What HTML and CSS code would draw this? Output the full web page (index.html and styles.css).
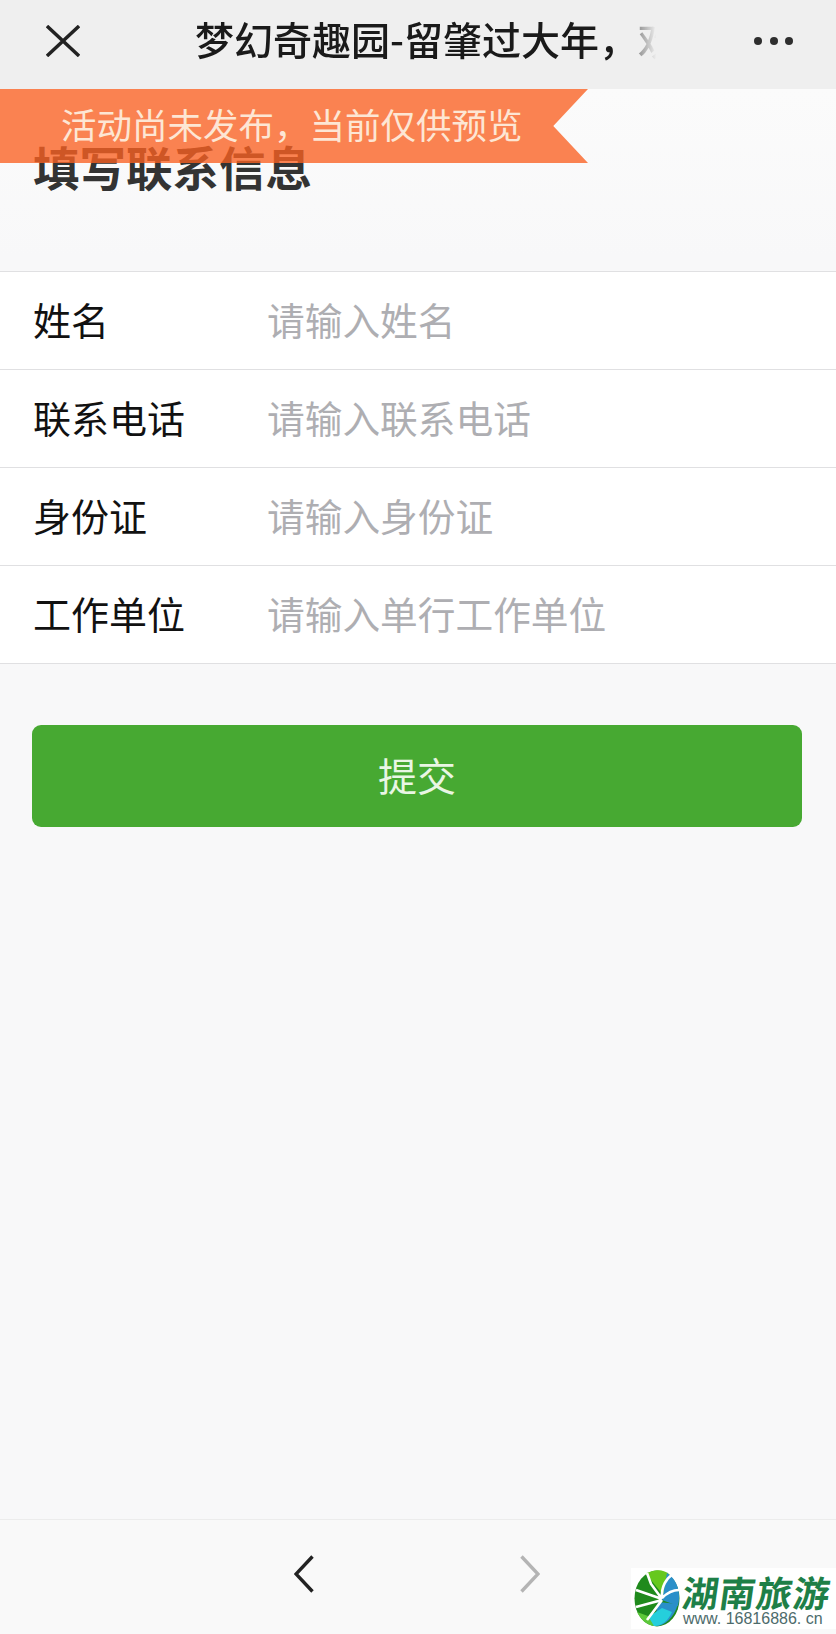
FILE: index.html
```html
<!DOCTYPE html>
<html lang="zh-CN">
<head>
    <meta charset="UTF-8">
    <meta name="viewport" content="width=device-width, initial-scale=1.0">
    <title>填写联系信息</title>
    <link rel="stylesheet" href="styles.css">
</head>
<body>
    <div class="page">
        <header class="top-bar">
            <svg class="close-icon" width="34" height="32" viewBox="0 0 34 32">
                <path d="M1 1 L33 31 M33 1 L1 31" fill="none" stroke="#222" stroke-width="3.4"/>
            </svg>
            <div class="top-title">梦幻奇趣园-留肇过大年，欢迎您</div>
            <div class="more-dots"><span></span><span></span><span></span></div>
        </header>

        <main class="content">
            <h1 class="form-title">填写联系信息</h1>
            <form class="form-list">
                <div class="form-row">
                    <label class="form-label">姓名</label>
                    <span class="form-hint">请输入姓名</span>
                </div>
                <div class="form-row">
                    <label class="form-label">联系电话</label>
                    <span class="form-hint">请输入联系电话</span>
                </div>
                <div class="form-row">
                    <label class="form-label">身份证</label>
                    <span class="form-hint">请输入身份证</span>
                </div>
                <div class="form-row">
                    <label class="form-label">工作单位</label>
                    <span class="form-hint">请输入单行工作单位</span>
                </div>
            </form>
            <button class="submit-btn" type="button">提交</button>
        </main>

        <footer class="bottom-bar">
            <svg class="nav-arrow" width="20" height="38" viewBox="0 0 20 38">
                <path d="M18.5 1.5 L2 19 L18.5 36.5" fill="none" stroke="#222" stroke-width="3.4"/>
            </svg>
            <svg class="nav-arrow" width="20" height="38" viewBox="0 0 20 38">
                <path d="M1.5 1.5 L18 19 L1.5 36.5" fill="none" stroke="#b4b4b4" stroke-width="3.4"/>
            </svg>
        </footer>

        <!-- banner sits over the heading, heading shows through it -->
        <div class="notice">
            <span class="notice-text">活动尚未发布，当前仅供预览</span>
        </div>

        <div class="watermark">
            <svg class="watermark-logo" width="46" height="57" viewBox="0 0 46 57">
                <ellipse cx="23" cy="28.5" rx="22.5" ry="28" fill="#1f8a1c"/>
                <path d="M12 4 C20 -1 30 -1 36 5 L30 26 Z" fill="#66c81e"/>
                <path d="M33 3 C44 10 47 24 44 36 L28 30 Z" fill="#2a8fc9"/>
                <path d="M44 34 C40 48 30 57 20 56 L24 32 Z" fill="#2a8fc9"/>
                <path d="M38 42 C34 51 27 57 19 56 L14 47 L28 38 Z" fill="#25cfdc"/>
                <path d="M3 42 C7 50 13 55 20 56 L14 46 Z" fill="#5cc83a"/>
                <path d="M2 20 L28 29 M2 37 L28 30 M13 3 L17 14 L28 29 M28 28 C27 16 33 8 38 5 M28 28 C34 22 40 20 45 20 M28 30 L13 50" fill="none" stroke="#fff" stroke-width="2.6"/>
            </svg>
            <div class="watermark-text">
                <div class="watermark-name">湖南旅游</div>
                <div class="watermark-url">www. 16816886. cn</div>
            </div>
        </div>
    </div>
</body>
</html>
```

FILE: styles.css
```css
* {
    box-sizing: border-box;
}
html, body {
    margin: 0;
    padding: 0;
}
body {
    font-family: "Noto Sans CJK SC", "Liberation Sans", sans-serif;
    background-color: #f8f8f9;
    color: #111;
}
.page {
    position: relative;
    width: 836px;
    height: 1634px;
    overflow: hidden;
    display: flex;
    flex-direction: column;
}
.top-bar {
    height: 89px;
    flex: none;
    background-color: #efefef;
    display: flex;
    align-items: center;
    padding: 0 43px 8px 46px;
}
.close-icon {
    flex: none;
}
.top-title {
    width: 466px;
    margin: 0 0 5px 115px;
    font-size: 39px;
    line-height: 50px;
    font-weight: 500;
    color: #1a1a1a;
    white-space: nowrap;
    overflow: hidden;
    -webkit-mask-image: linear-gradient(to right, #000 90%, transparent 99%);
    mask-image: linear-gradient(to right, #000 90%, transparent 99%);
}
.more-dots {
    margin-left: auto;
    display: flex;
    gap: 7.5px;
}
.more-dots span {
    width: 8px;
    height: 8px;
    border-radius: 50%;
    background-color: #2e2e2e;
}
.notice {
    position: absolute;
    left: 0;
    top: 89px;
    width: 588px;
    height: 74px;
    background-color: rgba(250, 96, 33, 0.78);
    clip-path: polygon(0 0, 100% 0, 94.1% 50%, 100% 100%, 0 100%);
    padding: 0 0 5px 61px;
    display: flex;
    align-items: center;
}
.notice-text {
    font-size: 35.5px;
    color: #fde6d4;
    white-space: nowrap;
}
.content {
    flex: 1;
    background: linear-gradient(#fbfbfb 0, #f8f8f9 170px);
}
.form-title {
    margin: 0;
    padding: 47px 0 0 33px;
    height: 182px;
    font-size: 46.5px;
    line-height: 60px;
    font-weight: 700;
    color: #333;
}
.form-list {
    background-color: #fff;
    border-top: 1px solid #e0e0e2;
}
.form-row {
    height: 98px;
    display: flex;
    align-items: center;
    padding: 0 0 5px 33px;
    border-bottom: 1px solid #e0e0e2;
    font-size: 38px;
}
.form-label {
    width: 234px;
    color: #111;
}
.form-hint {
    font-size: 37.7px;
    color: #aeaeb2;
}
.submit-btn {
    display: block;
    width: 770px;
    height: 102px;
    margin: 61px 0 0 32px;
    padding: 0 0 4px;
    border: none;
    border-radius: 9px;
    background-color: #47a932;
    color: #e9f6e4;
    font-family: inherit;
    font-size: 39px;
}
.bottom-bar {
    height: 115px;
    flex: none;
    background-color: #f9f9f9;
    border-top: 1px solid #ececec;
    display: flex;
    align-items: center;
    gap: 206px;
    padding: 0 0 7px 294px;
}
.watermark {
    position: absolute;
    left: 631px;
    top: 1568px;
    width: 205px;
    height: 61px;
    background-color: #fff;
    display: flex;
    align-items: center;
    padding-left: 3px;
    gap: 3px;
}
.watermark-logo {
    flex: none;
}
.watermark-name {
    font-size: 36px;
    line-height: 40px;
    font-weight: 700;
    letter-spacing: 1px;
    color: #1e7f47;
    white-space: nowrap;
    transform: skewX(-8deg);
}
.watermark-url {
    font-family: "Liberation Sans", sans-serif;
    font-size: 16px;
    line-height: 16px;
    color: #4d6b6b;
    white-space: nowrap;
}
```
